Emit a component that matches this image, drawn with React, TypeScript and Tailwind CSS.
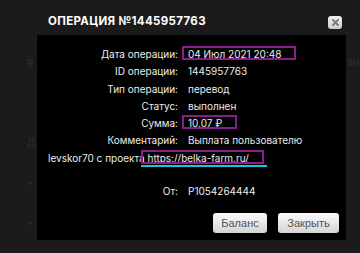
import type { ReactNode } from 'react';

type Row = {
  label: string;
  value: ReactNode;
};

function Marked({ children }: { children: ReactNode }) {
  return (
    <span className="relative">
      {children}
      <span className="pointer-events-none absolute -left-[6px] -right-[15px] -top-[2px] bottom-0 border-2 border-[#8b1c8b]" />
    </span>
  );
}

function InfoRow({ label, children }: { label: string; children: ReactNode }) {
  return (
    <div>
      <span className="inline-block w-[130px] text-right">{label}</span>
      <span className="ml-[10px]">{children}</span>
    </div>
  );
}

const rows: Row[] = [
  { label: 'Дата операции:', value: <Marked>04 Июл 2021 20:48</Marked> },
  { label: 'ID операции:', value: '1445957763' },
  { label: 'Тип операции:', value: 'перевод' },
  { label: 'Статус:', value: 'выполнен' },
  { label: 'Сумма:', value: <Marked>10.07 ₽</Marked> },
];

const buttonClass =
  "h-[20px] rounded-[3px] bg-gradient-to-b from-[#fbfbfb] to-[#d4d4d4] font-['Liberation_Sans',sans-serif] text-[11px] leading-[20px] text-[#555]";

export default function App() {
  return (
    <div className="relative h-[253px] w-[360px] overflow-hidden bg-[#1b1b1b] font-['Inter',sans-serif] text-[10px] text-[#ececec]">
      {/* page behind the overlay */}
      <span className="absolute left-[27px] top-[56px] text-[10px] font-bold text-[#2a2a2a]">R</span>
      <span className="absolute left-[347px] top-[56px] text-[9px] font-bold text-[#2a2a2a]">SH</span>
      <span className="absolute left-[27px] top-[135px] text-[10px] font-bold text-[#2a2a2a]">Д</span>
      <span className="absolute left-[29px] top-[182px] h-[3px] w-[3px] rounded-full bg-[#2a2a2a]" />
      <span className="absolute left-[29px] top-[222px] h-[3px] w-[3px] rounded-full bg-[#2a2a2a]" />

      <div className="relative ml-[37px] flex w-[309px] flex-col">
        <div className="flex h-[35px] items-center justify-between pb-[1px] pl-[11px] pr-[4px] pt-[10px]">
          <h1 className="text-[11.5px] font-bold tracking-[0.03em] text-white">ОПЕРАЦИЯ №1445957763</h1>
          <div className="flex h-[13px] w-[14px] shrink-0 items-center justify-center rounded-[3px] bg-gradient-to-b from-[#f2f2f2] to-[#cdcdcd] text-[#777]">
            <svg width="7" height="7" viewBox="0 0 7 7">
              <path d="M1 1L6 6M6 1L1 6" stroke="currentColor" strokeWidth="1.8" strokeLinecap="round" />
            </svg>
          </div>
        </div>

        <div className="h-[205px] bg-black pl-[11px] pr-[7px] pt-[11px] leading-[17.3px]">
          {rows.map((row) => (
            <InfoRow key={row.label} label={row.label}>
              {row.value}
            </InfoRow>
          ))}

          <InfoRow label="Комментарий:">
            Выплата пользователю levskor70 с проекта{' '}
            <span className="relative">
              <Marked>https://belka-farm.ru/</Marked>
              <span className="absolute -bottom-[3px] -left-[6px] -right-[18px] h-[2px] bg-[#14c8d8]" />
            </span>
          </InfoRow>

          <div className="h-[16px]" />

          <InfoRow label="От:">P1054264444</InfoRow>

          <div className="mt-[13px] flex justify-end gap-[11px]">
            <button className={`${buttonClass} w-[54px]`}>Баланс</button>
            <button className={`${buttonClass} w-[61px]`}>Закрыть</button>
          </div>
        </div>
      </div>
    </div>
  );
}
